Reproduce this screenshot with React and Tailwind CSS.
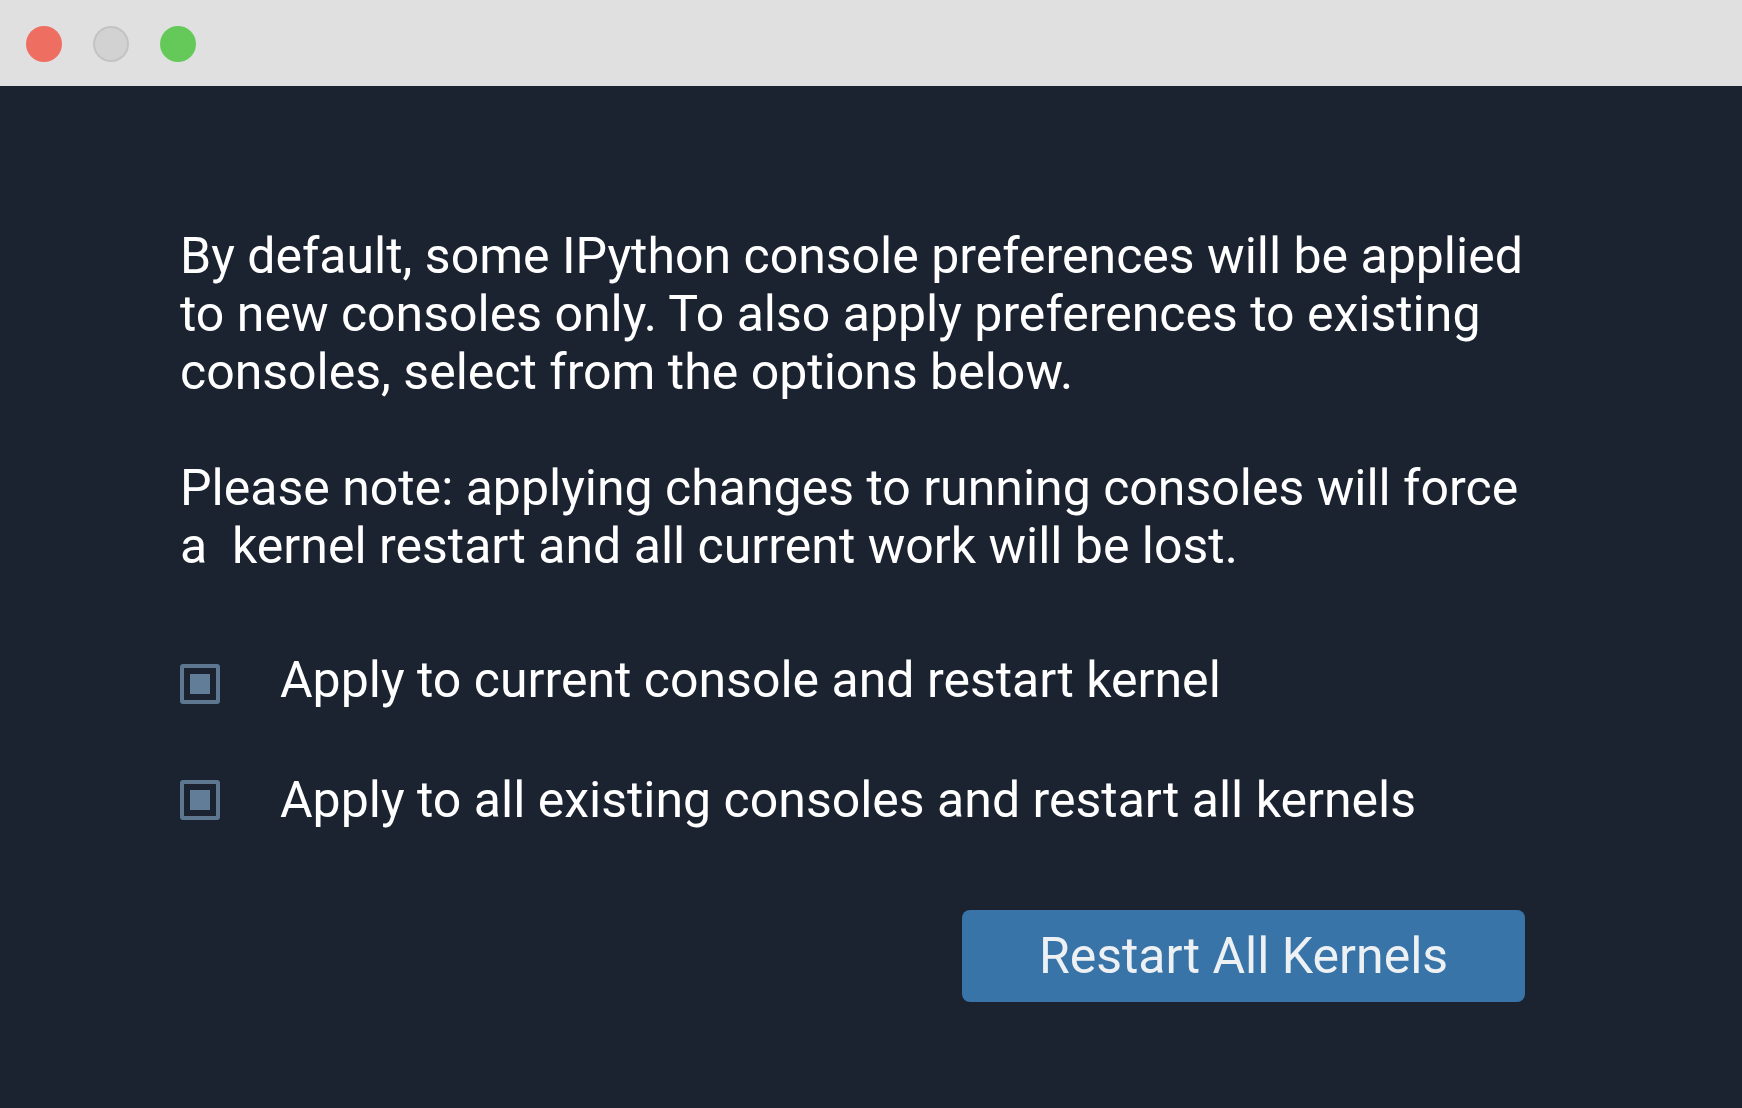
export default function App() {
  return (
    <div className="w-[1742px] h-[1108px] flex flex-col bg-[#1c2330] font-['Roboto',sans-serif] overflow-hidden">
      <div className="h-[86px] shrink-0 bg-[#e0e0e0] flex items-center gap-[31px] pl-[26px] pt-[2px]">
        <span className="w-[36px] h-[36px] rounded-full bg-[#ee6e62]" />
        <span className="w-[36px] h-[36px] rounded-full bg-[#d2d2d2] border-2 border-[#c3c3c3]" />
        <span className="w-[36px] h-[36px] rounded-full bg-[#65c95a]" />
      </div>

      <div className="pl-[178px] pt-[141px] w-[1525px] text-white">
        <p className="pl-[2px] text-[50px] leading-[58px]">
          By default, some IPython console preferences will be applied
          <br />
          to new consoles only. To also apply preferences to existing
          <br />
          consoles, select from the options below.
        </p>
        <p className="pl-[2px] mt-[58px] text-[50px] leading-[58px] whitespace-pre-wrap">
          {'Please note: applying changes to running consoles will force\na  kernel restart and all current work will be lost.'}
        </p>

        <div className="mt-[76px] flex flex-col gap-[62px]">
          <Option label="Apply to current console and restart kernel" boxTop="mt-[13px]" />
          <Option label="Apply to all existing consoles and restart all kernels" boxTop="mt-[9px]" />
        </div>

        <div className="mt-[81px] flex justify-end">
          <button className="w-[563px] h-[92px] rounded-[8px] bg-[#3874a8] text-[#eef1f4] text-[50px] leading-none">
            Restart All Kernels
          </button>
        </div>
      </div>
    </div>
  );
}

function Option({ label, boxTop }) {
  return (
    <label className="flex items-start h-[58px] text-[50px] leading-[58px]">
      <span
        className={`ml-[2px] w-[40px] h-[40px] shrink-0 rounded-[3px] border-4 border-[#5c778f] flex items-center justify-center ${boxTop}`}
      >
        <span className="w-[20px] h-[20px] bg-[#627d97]" />
      </span>
      <span className="ml-[60px]">{label}</span>
    </label>
  );
}
